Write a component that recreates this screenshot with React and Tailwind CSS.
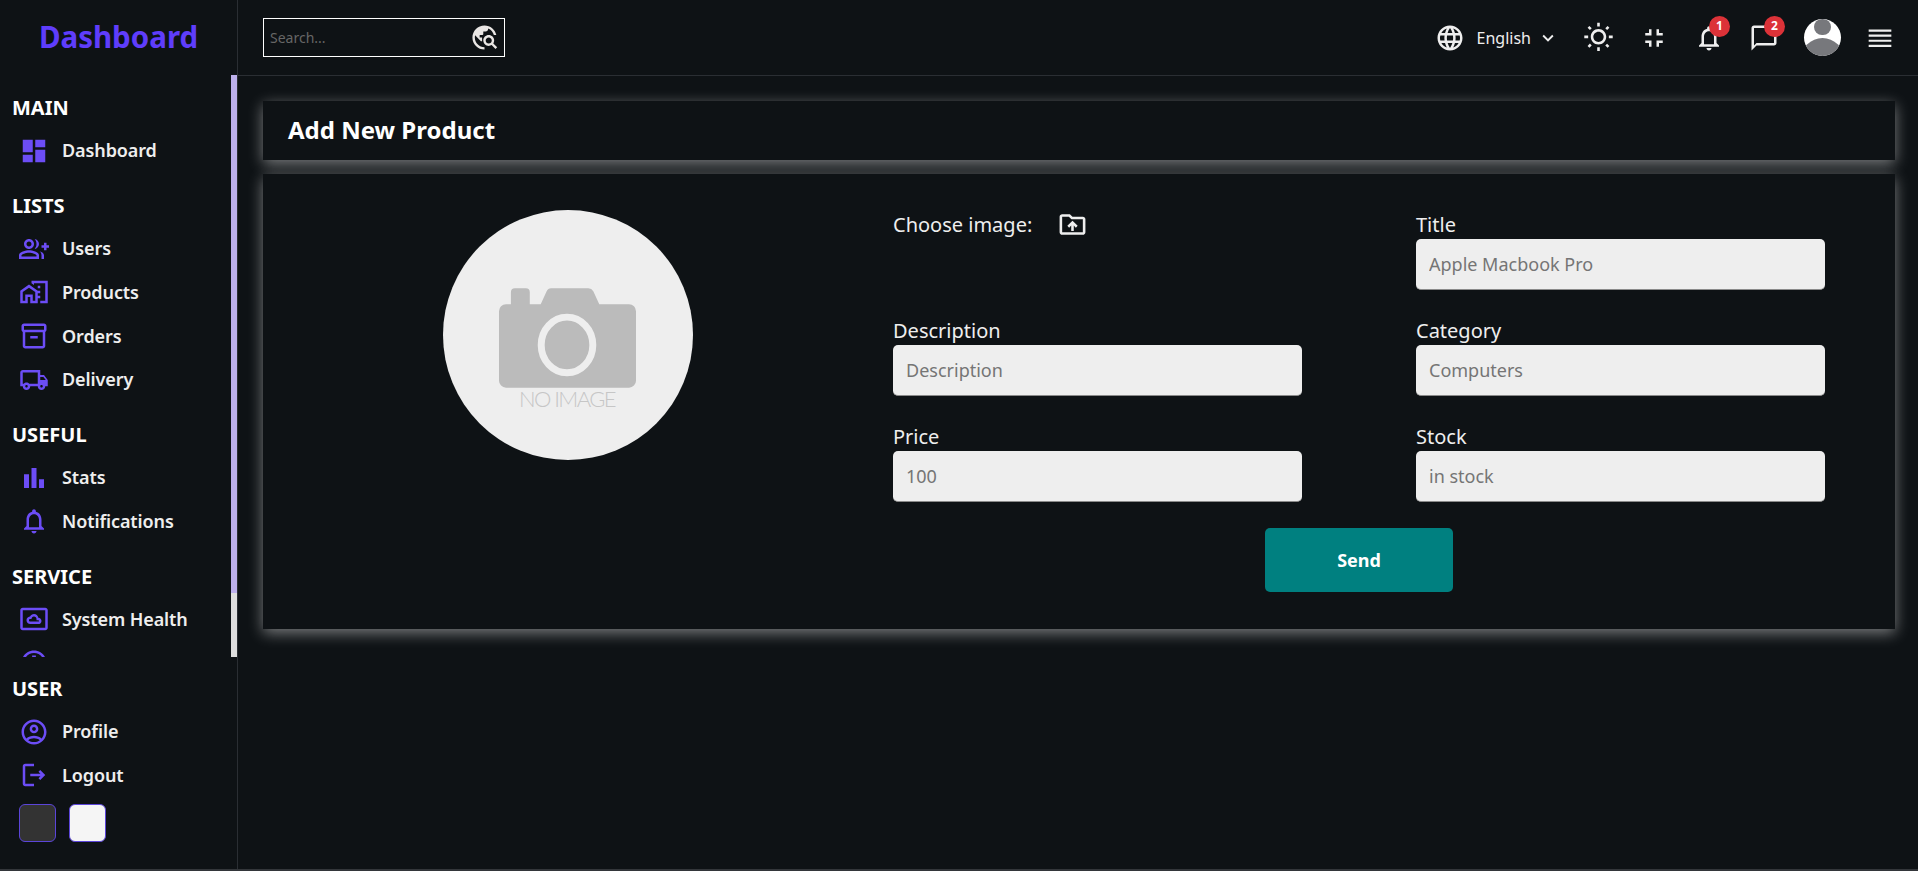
const PURPLE = "#6c4df6";

function Icon({ d, size = 30, color = PURPLE }) {
  return (
    <svg width={size} height={size} viewBox="0 0 24 24" fill={color} fillRule="evenodd" className="shrink-0">
      <path d={d} />
    </svg>
  );
}

const icons = {
  dashboard: "M3 13h8V3H3v10zm0 8h8v-6H3v6zm10 0h8V11h-8v10zm0-18v6h8V3h-8z",
  users:
    "M22 9V7h-2v2h-2v2h2v2h2v-2h2V9h-2zM8 12c2.21 0 4-1.79 4-4s-1.79-4-4-4-4 1.79-4 4 1.79 4 4 4zm0-6c1.1 0 2 .9 2 2s-.9 2-2 2-2-.9-2-2 .9-2 2-2zM8 13c-2.67 0-8 1.34-8 4v3h16v-3c0-2.66-5.33-4-8-4zm6 5H2v-.99C2.2 16.29 5.3 15 8 15s5.8 1.29 6 2zM12.51 4.05C13.43 5.11 14 6.49 14 8s-.57 2.89-1.49 3.95C14.47 11.7 16 10.04 16 8s-1.53-3.7-3.49-3.95zM16.53 13.83c.89.83 1.47 1.87 1.47 3.17v3h2v-3c0-1.45-1.59-2.51-3.47-3.17z",
  products:
    "M1 11v10h6v-5h2v5h6V11L8 6l-7 5zm12 8h-2v-5H5v5H3v-7l5-3.5 5 3.5v7zM17 7h-2v2h2V7zm0 4h-2v2h2v-2zm0 4h-2v2h2v-2zM10 3v1.97l2 1.43V5h9v14h-4v2h6V3z",
  orders:
    "M20 2H4c-1 0-2 .9-2 2v3.01c0 .72.43 1.34 1 1.69V20c0 1.1 1.1 2 2 2h14c.9 0 2-.9 2-2V8.7c.57-.35 1-.97 1-1.69V4c0-1.1-1-2-2-2zm-1 18H5V9h14v11zm1-13H4V4h16v3zM9 12h6v2H9z",
  delivery:
    "M20 8h-3V4H3c-1.1 0-2 .9-2 2v11h2c0 1.66 1.34 3 3 3s3-1.34 3-3h6c0 1.66 1.34 3 3 3s3-1.34 3-3h2v-5l-3-4zm-.5 1.5 1.96 2.5H17V9.5h2.5zM6 18c-.55 0-1-.45-1-1s.45-1 1-1 1 .45 1 1-.45 1-1 1zm2.22-3c-.55-.61-1.33-1-2.22-1s-1.67.39-2.22 1H3V6h12v9H8.22zM18 18c-.55 0-1-.45-1-1s.45-1 1-1 1 .45 1 1-.45 1-1 1z",
  stats: "M4 9h4v11H4zm12 4h4v7h-4zm-6-9h4v16h-4z",
  bell:
    "M12 22c1.1 0 2-.9 2-2h-4c0 1.1.9 2 2 2zm6-6v-5c0-3.07-1.63-5.64-4.5-6.32V4c0-.83-.67-1.5-1.5-1.5s-1.5.67-1.5 1.5v.68C7.64 5.36 6 7.92 6 11v5l-2 2v1h16v-1l-2-2zm-2 1H8v-6c0-2.48 1.51-4.5 4-4.5s4 2.02 4 4.5v6z",
  health:
    "M21 3H3c-1.1 0-2 .9-2 2v14c0 1.1.9 2 2 2h18c1.1 0 2-.9 2-2V5c0-1.1-.9-2-2-2zm0 16.01H3V4.99h18v14.02zM9 16h6.5c1.38 0 2.5-1.12 2.5-2.5S16.88 11 15.5 11h-.05c-.24-1.69-1.69-3-3.45-3-1.4 0-2.6.83-3.16 2.02h-.16C7.17 10.18 6 11.45 6 13c0 1.66 1.34 3 3 3zm0-4h.9l.5-1.15C10.7 10.3 11.3 10 12 10c1.1 0 2 .9 2 2v1h1.5c.28 0 .5.22.5.5s-.22.5-.5.5H9c-.55 0-1-.45-1-1s.45-1 1-1z",
  logs: "M12 2C6.48 2 2 6.48 2 12s4.48 10 10 10 10-4.48 10-10S17.52 2 12 2zm0 18c-4.41 0-8-3.59-8-8s3.59-8 8-8 8 3.59 8 8-3.59 8-8 8zm-1.5-14h3v3h-3z",
  profile:
    "M12 2C6.48 2 2 6.48 2 12s4.48 10 10 10 10-4.48 10-10S17.52 2 12 2zM7.35 18.5C8.66 17.56 10.26 17 12 17s3.34.56 4.65 1.5c-1.31.94-2.91 1.5-4.65 1.5s-3.34-.56-4.65-1.5zm10.79-1.38C16.45 15.8 14.32 15 12 15s-4.45.8-6.14 2.12C4.7 15.73 4 13.95 4 12c0-4.42 3.58-8 8-8s8 3.58 8 8c0 1.95-.7 3.73-1.86 5.12zM12 6c-1.93 0-3.5 1.57-3.5 3.5S10.07 13 12 13s3.5-1.57 3.5-3.5S13.93 6 12 6zm0 5c-.83 0-1.5-.67-1.5-1.5S11.17 8 12 8s1.5.67 1.5 1.5S12.83 11 12 11z",
  logout:
    "M17 8l-1.41 1.41L17.17 11H9v2h8.17l-1.58 1.58L17 16l4-4-4-4zM5 5h7V3H5c-1.1 0-2 .9-2 2v14c0 1.1.9 2 2 2h7v-2H5V5z",
  globe:
    "M11.99 2C6.47 2 2 6.48 2 12s4.47 10 9.99 10C17.52 22 22 17.52 22 12S17.52 2 11.99 2zm6.93 6h-2.95c-.32-1.25-.78-2.45-1.38-3.56 1.84.63 3.37 1.91 4.33 3.56zM12 4.04c.83 1.2 1.48 2.53 1.91 3.96h-3.82c.43-1.43 1.08-2.76 1.91-3.96zM4.26 14C4.1 13.36 4 12.69 4 12s.1-1.36.26-2h3.38c-.08.66-.14 1.32-.14 2s.06 1.34.14 2H4.26zm.82 2h2.95c.32 1.25.78 2.45 1.38 3.56-1.84-.63-3.37-1.9-4.33-3.56zm2.95-8H5.08c.96-1.66 2.49-2.93 4.33-3.56C8.81 5.55 8.35 6.75 8.03 8zM12 19.96c-.83-1.2-1.48-2.53-1.91-3.96h3.82c-.43 1.43-1.08 2.76-1.91 3.96zM14.34 14H9.66c-.09-.66-.16-1.32-.16-2s.07-1.35.16-2h4.68c.09.65.16 1.32.16 2s-.07 1.34-.16 2zm.25 5.56c.6-1.11 1.06-2.31 1.38-3.56h2.95c-.96 1.65-2.49 2.93-4.33 3.56zM16.36 14c.08-.66.14-1.32.14-2s-.06-1.34-.14-2h3.38c.16.64.26 1.31.26 2s-.1 1.36-.26 2h-3.38z",
  chevron: "M16.59 8.59 12 13.17 7.41 8.59 6 10l6 6 6-6z",
  sun:
    "m6.76 4.84-1.8-1.79-1.41 1.41 1.79 1.79 1.42-1.41zM4 10.5H1v2h3v-2zm9-9.95h-2V3.5h2V.55zm7.45 3.91-1.41-1.41-1.79 1.79 1.41 1.41 1.79-1.79zm-3.21 13.7 1.79 1.8 1.41-1.41-1.8-1.79-1.4 1.4zM20 10.5v2h3v-2h-3zm-8-5c-3.31 0-6 2.69-6 6s2.69 6 6 6 6-2.69 6-6-2.69-6-6-6zm0 10c-2.21 0-4-1.79-4-4s1.79-4 4-4 4 1.79 4 4-1.79 4-4 4zm-1 4h2v2.95h-2V19.5zm-7.45-.96 1.41 1.41 1.79-1.8-1.41-1.41-1.79 1.8z",
  exit: "M5 16h3v3h2v-5H5v2zm3-8H5v2h5V5H8v3zm6 11h2v-3h3v-2h-5v5zm2-11V5h-2v5h5V8h-3z",
  chat: "M20 2H4c-1.1 0-2 .9-2 2v18l4-4h14c1.1 0 2-.9 2-2V4c0-1.1-.9-2-2-2zm0 14H6l-2 2V4h16v12z",
  menu: "M4 6h16v1.5H4zM4 9.6h16v1.5H4zM4 13.2h16v1.5H4zM4 16.8h16v1.5H4z",
  explore:
    "M19.3 16.9c.4-.7.7-1.5.7-2.4 0-2.5-2-4.5-4.5-4.5S11 12 11 14.5s2 4.5 4.5 4.5c.9 0 1.7-.3 2.4-.7l3.2 3.2 1.4-1.4-3.2-3.2zm-3.8.1c-1.4 0-2.5-1.1-2.5-2.5s1.1-2.5 2.5-2.5 2.5 1.1 2.5 2.5-1.1 2.5-2.5 2.5zM12 20v2C6.48 22 2 17.52 2 12S6.48 2 12 2c4.84 0 8.87 3.44 9.8 8h-2.07c-.64-2.46-2.4-4.47-4.73-5.41V5c0 1.1-.9 2-2 2h-2v2c0 .55-.45 1-1 1H8v2h2v3H9l-4.79-4.79C4.08 10.79 4 11.38 4 12c0 4.41 3.59 8 8 8z",
  upload:
    "M20 6h-8l-2-2H4c-1.1 0-1.99.9-1.99 2L2 18c0 1.1.9 2 2 2h16c1.1 0 2-.9 2-2V8c0-1.1-.9-2-2-2zm0 12H4V6h5.17l2 2H20v10zM9.41 14.42 11 12.84V17h2v-4.16l1.59 1.59L16 13.01 12.01 9 8 13.01l1.41 1.41z",
};

const sections = [
  { title: "MAIN", items: [["Dashboard", "dashboard"]] },
  {
    title: "LISTS",
    items: [
      ["Users", "users"],
      ["Products", "products"],
      ["Orders", "orders"],
      ["Delivery", "delivery"],
    ],
  },
  {
    title: "USEFUL",
    items: [
      ["Stats", "stats"],
      ["Notifications", "bell"],
    ],
  },
  {
    title: "SERVICE",
    items: [
      ["System Health", "health"],
      ["Logs", "logs"],
    ],
  },
];

function NavSection({ title, items }) {
  return (
    <div className="mb-[18.5px]">
      <div className="h-[30px] pl-[12px] text-[20px] font-bold leading-[30px] text-white">{title}</div>
      <ul className="mt-[6px]">
        {items.map(([label, icon]) => (
          <li key={label} className="flex h-[43.6px] items-center pl-[19px]">
            <Icon d={icons[icon]} />
            <span className="ml-[13px] text-[18px] font-semibold tracking-[-0.1px] text-[#eeeeee]">{label}</span>
          </li>
        ))}
      </ul>
    </div>
  );
}

function Sidebar() {
  return (
    <aside className="flex w-[238px] shrink-0 flex-col border-r border-[#2a2e33]">
      <div className="flex h-[75px] shrink-0 items-center justify-center text-[29.5px] font-bold text-[#5f3dfb]">
        Dashboard
      </div>
      <div className="flex h-[582px] shrink-0">
        <div className="flex-1 overflow-hidden pt-[18px]">
          {sections.map((s) => (
            <NavSection key={s.title} {...s} />
          ))}
        </div>
        <div className="flex w-[6px] shrink-0 flex-col">
          <div className="h-[518px] bg-[#bdb0ec]" />
          <div className="flex-1 bg-[#dedede]" />
        </div>
      </div>
      <div className="pt-[17px]">
        <NavSection
          title="USER"
          items={[
            ["Profile", "profile"],
            ["Logout", "logout"],
          ]}
        />
      </div>
      <div className="-mt-[12px] flex gap-[13px] pl-[19px]">
        <div className="h-[38px] w-[37px] rounded-md border border-[#5b45d9] bg-[#333333]" />
        <div className="h-[38px] w-[37px] rounded-md border border-[#5b45d9] bg-[#f5f5f5]" />
      </div>
    </aside>
  );
}

function Badge({ n }) {
  return (
    <span className="absolute -top-[7px] left-[15px] flex h-[21px] w-[21px] items-center justify-center rounded-full bg-[#dc3238] text-[12px] font-bold text-white">
      {n}
    </span>
  );
}

function Header() {
  return (
    <header className="flex h-[76px] shrink-0 items-center justify-between border-b border-[#2a2e33] pl-[25px] pr-[21px]">
      <div className="flex h-[39px] w-[242px] items-center justify-between border border-white pl-[6px] pr-[5px]">
        <input
          placeholder="Search..."
          className="w-[180px] bg-transparent text-[14px] text-white outline-none placeholder:text-[#666666]"
        />
        <Icon d={icons.explore} size={29} color="#e9e6e4" />
      </div>
      <div className="flex items-center text-[#eeeeee]">
        <Icon d={icons.globe} size={30} color="#eeeeee" />
        <span className="ml-[12px] text-[16px] font-normal">English</span>
        <span className="ml-[6px]">
          <Icon d={icons.chevron} size={22} color="#eeeeee" />
        </span>
        <span className="ml-[24px]">
          <Icon d={icons.sun} size={31} color="#eeeeee" />
        </span>
        <span className="ml-[25px]">
          <Icon d={icons.exit} size={30} color="#eeeeee" />
        </span>
        <span className="relative ml-[25px]">
          <Icon d={icons.bell} size={30} color="#eeeeee" />
          <Badge n="1" />
        </span>
        <span className="relative ml-[25px]">
          <Icon d={icons.chat} size={30} color="#eeeeee" />
          <Badge n="2" />
        </span>
        <span className="relative ml-[25px] h-[37px] w-[37px] overflow-hidden rounded-full bg-white">
          <span className="absolute left-[10px] top-0 h-[16px] w-[17px] rounded-full bg-[#77787c]" />
          <span className="absolute -left-[3px] top-[19px] h-[30px] w-[43px] rounded-t-full bg-[#77787c]" />
        </span>
        <span className="ml-[22px]">
          <Icon d={icons.menu} size={34} color="#eeeeee" />
        </span>
      </div>
    </header>
  );
}

function Field({ label, placeholder }) {
  return (
    <div className="flex flex-col">
      <label className="h-[27px] text-[20px] leading-[25px] text-[#eeeeee]">{label}</label>
      <input
        placeholder={placeholder}
        className="h-[51px] w-full rounded-[5px] border-b border-[#8a8a8a] bg-[#eeeeee] px-[13px] text-[18px] outline-none placeholder:text-[#757575]"
      />
    </div>
  );
}

function NoImage() {
  return (
    <div className="flex h-[250px] w-[250px] flex-col items-center rounded-full bg-[#eeeeee] pr-[2px] pt-[77px]">
      <svg width="137" height="101" viewBox="0 0 138 101">
        <path
          fill="#bbbbbb"
          d="M12 5a4 4 0 0 1 4-4h11a4 4 0 0 1 4 4v12h11l6-13a5 5 0 0 1 5-3h37a6 6 0 0 1 5 3l6 13h30a7 7 0 0 1 7 7v70a7 7 0 0 1-7 7H7a7 7 0 0 1-7-7V24a7 7 0 0 1 7-7h5z"
        />
        <ellipse cx="68.5" cy="58" rx="26" ry="28" fill="#bbbbbb" stroke="#eeeeee" strokeWidth="7" />
      </svg>
      <span className="mt-[1px] text-[22px] font-light leading-[20px] tracking-[-1.6px] text-[#c6c6c6] [font-family:Lato,sans-serif]">
        NO IMAGE
      </span>
    </div>
  );
}

export default function App() {
  return (
    <div className="flex h-[871px] w-full overflow-hidden border-b-2 border-[#33363a] bg-[#0e1215] [font-family:'Noto_Sans',sans-serif]">
      <Sidebar />
      <main className="flex min-w-0 flex-1 flex-col">
        <Header />
        <div className="flex flex-col gap-[14px] pl-[25px] pr-[23px] pt-[25px]">
          <div className="flex h-[59px] items-center bg-[#0e1215] pb-[2px] pl-[25px] text-[24px] font-bold text-white shadow-[0_4px_14px_rgba(255,255,255,0.45)]">
            Add New Product
          </div>
          <div className="flex h-[455px] bg-[#0e1215] pt-[36px] shadow-[0_4px_14px_rgba(255,255,255,0.45)]">
            <div className="flex w-[610px] shrink-0 justify-center">
              <NoImage />
            </div>
            <form className="ml-[20px] flex flex-col items-center pt-[2px]">
              <div className="grid grid-cols-[409px_409px] gap-x-[114px] gap-y-[28px]">
                <div className="flex h-[27px] items-center pb-[2px] text-[20px] text-[#eeeeee]">
                  Choose image:
                  <span className="ml-[25px]">
                    <Icon d={icons.upload} size={31} color="#eeeeee" />
                  </span>
                </div>
                <Field label="Title" placeholder="Apple Macbook Pro" />
                <Field label="Description" placeholder="Description" />
                <Field label="Category" placeholder="Computers" />
                <Field label="Price" placeholder="100" />
                <Field label="Stock" placeholder="in stock" />
              </div>
              <button
                type="button"
                className="mt-[26px] h-[64px] w-[188px] rounded-[5px] bg-[#008080] text-[18px] font-bold text-white"
              >
                Send
              </button>
            </form>
          </div>
        </div>
      </main>
    </div>
  );
}
